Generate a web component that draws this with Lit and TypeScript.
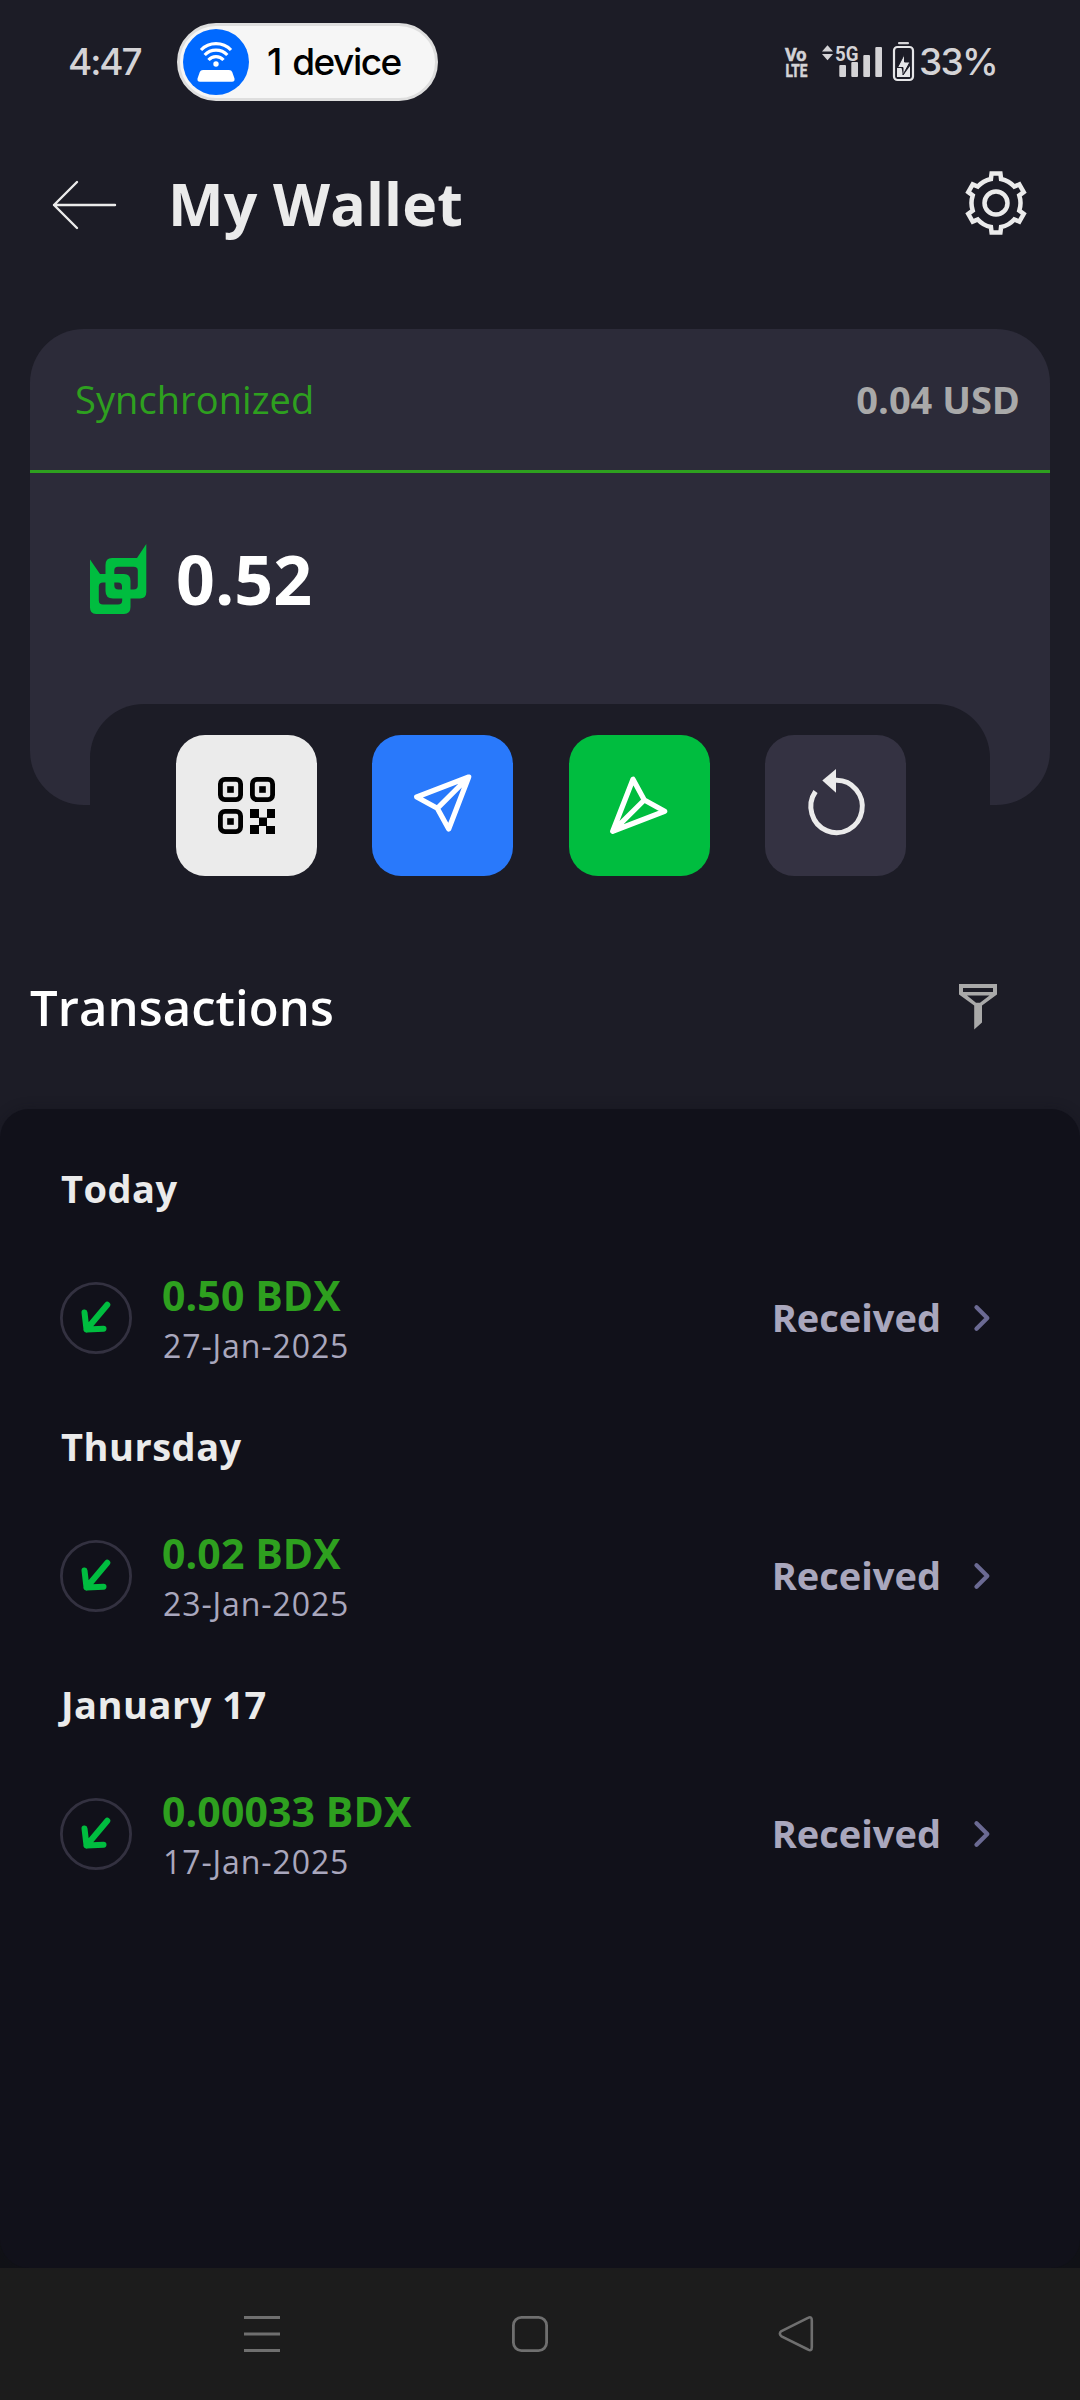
import { LitElement, html, css, svg } from "lit";
import { customElement, property } from "lit/decorators.js";

interface Transaction {
  day: string;
  amount: string;
  date: string;
  status: string;
}

const TRANSACTIONS: Transaction[] = [
  { day: "Today", amount: "0.50 BDX", date: "27-Jan-2025", status: "Received" },
  { day: "Thursday", amount: "0.02 BDX", date: "23-Jan-2025", status: "Received" },
  { day: "January 17", amount: "0.00033 BDX", date: "17-Jan-2025", status: "Received" },
];

/* Outline of the settings cog: six trapezoid teeth joined by arcs. */
function gearPath(cx: number, cy: number, rBody: number, rTip: number): string {
  const pt = (r: number, deg: number) => {
    const a = ((deg - 90) * Math.PI) / 180;
    return (cx + r * Math.cos(a)).toFixed(2) + " " + (cy + r * Math.sin(a)).toFixed(2);
  };
  let d = "";
  for (let i = 0; i < 6; i++) {
    const c = i * 60;
    d += (i === 0 ? "M" : "A" + rBody + " " + rBody + " 0 0 1 ") + pt(rBody, c - 12);
    d += "L" + pt(rTip, c - 8.5) + "L" + pt(rTip, c + 8.5) + "L" + pt(rBody, c + 12);
  }
  return d + "A" + rBody + " " + rBody + " 0 0 1 " + pt(rBody, -12) + "Z";
}

@customElement("status-bar")
export class StatusBar extends LitElement {
  static styles = css`
    :host { display: flex; height: 124px; box-sizing: border-box; padding: 23px 82px 0 68px; align-items: flex-start; font-family: Inter, "Liberation Sans", sans-serif; }
    .clock, .percent { font-size: 37px; font-weight: 500; line-height: 78px; color: #d4d3d6; white-space: nowrap; }
    .clock { width: 109px; letter-spacing: -2.1px; }
    .pill { display: flex; align-items: center; box-sizing: border-box; width: 261px; height: 78px; padding: 0 0 0 3px; border: 3px solid #dedede; border-radius: 39px; background: #f6f6f6; color: #000; font-size: 37px; font-weight: 500; line-height: 72px; letter-spacing: -1.5px; word-spacing: 3px; white-space: nowrap; }
    .badge { display: block; flex: none; margin-right: 18px; }
    .right { display: flex; margin-left: auto; height: 78px; }
    .icons { display: block; }
    .percent { width: 79px; letter-spacing: -1.7px; margin-left: 1px; }
    .small { font-family: Roboto, "Liberation Sans", sans-serif; font-weight: 700; fill: #d4d3d6; }
  `;
  render() {
    return html`
      <span class="clock">4:47</span>
      <div class="pill">
        <svg class="badge" width="66" height="66" viewBox="0 0 66 66">
          <circle cx="33" cy="33" r="33" fill="#0069ff" />
          <g fill="none" stroke="#fff" stroke-width="3.2">
            <path d="M18 21A21 21 0 0 1 48 21" />
            <path d="M21.700 26A15.500 15.500 0 0 1 44.300 26" />
            <path d="M25.500 31A10 10 0 0 1 40.500 31" />
          </g>
          <circle cx="33" cy="35" r="2.700" fill="#fff" />
          <path d="M20 41H46Q48.500 41 49.200 43L51.500 49.500Q52 52.800 49 52.800H17Q14 52.800 14.500 49.500L16.800 43Q17.500 41 20 41Z" fill="#fff" />
        </svg>
        <span>1 device</span>
      </div>
      <div class="right">
        <svg class="icons" width="138" height="78" viewBox="780 23 138 78">
          <text class="small" font-size="19" stroke="#d4d3d6" stroke-width="0.600"><tspan x="785" y="60.500" textLength="21.500" lengthAdjust="spacingAndGlyphs">Vo</tspan><tspan x="785.500" y="76.700" textLength="22" lengthAdjust="spacingAndGlyphs">LTE</tspan></text>
          <text class="small" x="835" y="60.500" font-size="21" textLength="23.500" lengthAdjust="spacingAndGlyphs">5G</text>
          <g fill="#d4d3d6">
            <path d="M827.500 45.200L833 51.500H822Z" />
            <path d="M827.500 60.200L833 54H822Z" />
            <rect x="839.300" y="65" width="6.700" height="12" rx="1" />
            <rect x="851.300" y="62" width="6.700" height="15" rx="1" />
            <rect x="863.300" y="55" width="6.700" height="22" rx="1" />
            <rect x="875.300" y="47" width="6.700" height="30" rx="1" />
            <rect x="898" y="42" width="11" height="2.200" rx="1" />
          </g>
          <rect x="894" y="47" width="19" height="33" rx="3.500" fill="none" stroke="#e6e6e8" stroke-width="2.200" />
          <path d="M897 68H901.500L903.500 75L910 66V77H897Z" fill="#e6e6e8" />
          <path d="M904.500 54V62H910L903 75V67.500H897.500Z" fill="#e6e6e8" stroke="#1c1c26" stroke-width="1" />
        </svg>
        <span class="percent">33%</span>
      </div>
    `;
  }
}

@customElement("wallet-card")
export class WalletCard extends LitElement {
  static styles = css`
    :host { display: block; margin: 0 30px; height: 547px; }
    .card { height: 476px; border-radius: 54px; background: #2c2b39; display: flex; flex-direction: column; }
    .sync { display: flex; justify-content: space-between; align-items: center; height: 139px; padding: 0 30px 2px 45px; border-bottom: 3px solid #2ea01f; font-size: 38px; line-height: 52px; }
    .state { color: #2ea01f; letter-spacing: 0.080px; }
    .fiat { color: #a9a9a9; font-weight: 700; }
    .balance { display: flex; align-items: center; padding: 68px 0 0 60px; height: 76px; gap: 29px; color: #fff; font-size: 68px; font-weight: 700; line-height: 76px; }
    .logo { display: block; }
    .notch { margin: auto 60px 0; height: 101px; border-radius: 54px 54px 0 0; background: #1c1c26; }
    .actions { display: flex; justify-content: space-between; padding: 0 144px 0 146px; margin-top: -70px; }
    .action { display: block; width: 141px; height: 141px; border-radius: 29px; }
    .scan { background: #ebebeb; }
    .send { background: #2979fb; }
    .receive { background: #00bd3f; }
    .rescan { background: #343242; }
  `;
  render() {
    const finder = (x: number, y: number) => svg`
      <rect x=${x + 2.4} y=${y + 2.4} width="20.200" height="20.200" rx="4.500" fill="none" stroke="#000" stroke-width="4.800" />
      <rect x=${x + 9.2} y=${y + 9.2} width="6.600" height="6.600" />`;
    const plane = "M96.700 42L44.700 62L65.300 73.300L76.700 94Z M96.700 42L65.300 73.300";
    return html`
      <div class="card">
        <div class="sync"><span class="state">Synchronized</span><span class="fiat">0.04 USD</span></div>
        <div class="balance">
          <svg class="logo" width="57" height="71" viewBox="0 0 57 71">
            <path fill="#00bd3f" fill-rule="evenodd" d="M0 15.500L10 30H15.500V21Q15.500 14 22 14H47L56.300 0V48Q56.300 54.500 50 54.500H40.500V63Q40.500 70 34 70H6Q0 70 0 63.500ZM13 38.500Q8.800 38.500 8.800 42.500V56.500Q8.800 60.500 13 60.500H28Q32.200 60.500 32.200 56.500V54.500H23Q15.500 54.500 15.500 47V38.500ZM24.300 30V26.500Q24.300 22.800 28 22.800H43.500Q47.800 22.800 47.800 26.500V41.500Q47.800 45.500 43.500 45.500H40.500V37Q40.500 30 34 30ZM24.300 38.500H28Q32 38.500 32 42.500V45.500H28.500Q24.300 45.500 24.300 41.500Z" />
          </svg>
          <span>0.52</span>
        </div>
        <div class="notch"></div>
      </div>
      <div class="actions">
        <svg class="action scan" viewBox="0 0 141 141">
          <g transform="translate(42 42)">
            ${finder(0, 0)}${finder(32, 0)}${finder(0, 32)}
            <path d="M32 32h9v8.500h8V32h8v9h-8v8h8v8h-9v-8h-7v8h-9v-9h9v-7h-9z" />
          </g>
        </svg>
        <svg class="action send" viewBox="0 0 141 141">
          <path d=${plane} fill="none" stroke="#fff" stroke-width="5.200" stroke-linejoin="round" />
        </svg>
        <svg class="action receive" viewBox="0 0 141 141">
          <path d="M64 44.300L43.700 96.300L95.700 76.300L75.300 65Z M43.700 96.300L75.300 65" fill="none" stroke="#fff" stroke-width="5.200" stroke-linejoin="round" />
        </svg>
        <svg class="action rescan" viewBox="0 0 141 141">
          <path d="M71 45.300A25.700 26.200 0 1 1 50.500 56.500" fill="none" stroke="#ebebeb" stroke-width="5" />
          <path d="M71 34V57.700L57.300 45.500Z" fill="#ebebeb" />
        </svg>
      </div>
    `;
  }
}

@customElement("transaction-row")
export class TransactionRow extends LitElement {
  @property({ attribute: false }) item!: Transaction;
  static styles = css`
    :host { display: block; height: 258px; }
    .day { height: 52px; padding: 0 61px; font-size: 38px; font-weight: 700; line-height: 52px; color: #ebebeb; letter-spacing: 0.500px; }
    .row { display: flex; align-items: center; padding: 52px 88px 0 60px; }
    .arrow { display: block; flex: none; margin-right: 30px; }
    .info { display: flex; flex-direction: column; padding-top: 4px; }
    .amount { font-size: 41px; font-weight: 700; line-height: 50px; color: #2ea01f; letter-spacing: 0.100px; }
    .date { height: 50px; font-size: 32px; line-height: 52px; color: #a9a7bd; letter-spacing: 0.900px; padding-left: 1px; }
    .status { margin-left: auto; padding-bottom: 2px; font-size: 38px; font-weight: 700; line-height: 52px; color: #a9a7bd; }
    .chevron { display: block; margin-left: 31px; }
  `;
  render() {
    return html`
      <div class="day">${this.item.day}</div>
      <div class="row">
        <svg class="arrow" width="72" height="72" viewBox="0 0 72 72">
          <circle cx="36" cy="36" r="34.600" fill="none" stroke="#333140" stroke-width="2.800" />
          <path d="M47.300 22.700L26.500 47.500M24.500 30.500L26.500 47.500L43.500 46.700" fill="none" stroke="#00bd3f" stroke-width="6" stroke-linecap="round" stroke-linejoin="round" />
        </svg>
        <div class="info">
          <span class="amount">${this.item.amount}</span>
          <span class="date">${this.item.date}</span>
        </div>
        <span class="status">${this.item.status}</span>
        <svg class="chevron" width="20" height="30" viewBox="0 0 20 30">
          <path d="M4.500 4.200L15.300 15L4.500 25.800" fill="none" stroke="#6b6a93" stroke-width="4.300" stroke-linecap="round" stroke-linejoin="round" />
        </svg>
      </div>
    `;
  }
}

@customElement("nav-bar")
export class NavBar extends LitElement {
  static styles = css`
    :host { display: flex; justify-content: space-between; align-items: center; box-sizing: border-box; height: 132px; padding: 0 264px 0 242px; background: #1c1c1c; }
    .nav { display: block; }
  `;
  render() {
    return html`
      <svg class="nav" width="40" height="40" viewBox="0 0 40 40"><path d="M2 3.500H38M2 20H38M2 36.500H38" stroke="#6f6f6f" stroke-width="3.200" /></svg>
      <svg class="nav" width="40" height="40" viewBox="0 0 40 40"><rect x="4.400" y="3.400" width="33.200" height="33.200" rx="8" fill="none" stroke="#6f6f6f" stroke-width="2.800" /></svg>
      <svg class="nav" width="40" height="40" viewBox="0 0 40 40"><path d="M32 3.900Q35.800 1.800 35.800 6.500V33Q35.800 37.800 32 35.500L5.500 22.300Q2.200 19.700 5.500 17.100Z" fill="none" stroke="#6f6f6f" stroke-width="2.600" stroke-linejoin="round" /></svg>
    `;
  }
}

@customElement("app-root")
export class AppRoot extends LitElement {
  static styles = css`
    :host { display: flex; flex-direction: column; width: 1080px; height: 2400px; overflow: hidden; background: #1c1c26; font-family: "Open Sans", "Noto Sans", sans-serif; }
    .header { display: flex; align-items: center; height: 160px; padding: 0 52px 0 50px; margin-bottom: 45px; }
    .title { margin: 0 auto 2px 48px; font-size: 59px; font-weight: 700; line-height: 80px; color: #ebebeb; letter-spacing: 0.150px; }
    .icon { display: block; }
    .heading { display: flex; justify-content: space-between; align-items: center; height: 66px; margin: 98px 80px 69px 30px; }
    .subtitle { margin: 0; font-size: 49px; font-weight: 600; line-height: 66px; color: #fff; letter-spacing: 0.080px; }
    .sheet { flex: 1; display: flex; background: linear-gradient(#1c1c26 50%, #111217 50%); }
    .panel { flex: 1; box-sizing: border-box; padding-top: 53px; border-radius: 29px; background: #11111a; box-shadow: 0 0 12px rgba(17, 17, 26, 0.350); }
  `;
  render() {
    return html`
      <status-bar></status-bar>
      <div class="header">
        <svg class="icon" width="70" height="60" viewBox="0 0 70 60">
          <path d="M65 31H4M27 8L4 31L27 54" fill="none" stroke="#ebebeb" stroke-width="2.400" stroke-linecap="round" stroke-linejoin="round" />
        </svg>
        <h1 class="title">My Wallet</h1>
        <svg class="icon" width="64" height="68" viewBox="0 0 64 68">
          <path d=${gearPath(32, 33, 24.5, 29.8)} fill="none" stroke="#ebebeb" stroke-width="4.500" />
          <circle cx="32" cy="33" r="11.500" fill="none" stroke="#ebebeb" stroke-width="4.500" />
        </svg>
      </div>
      <wallet-card></wallet-card>
      <div class="heading">
        <h2 class="subtitle">Transactions</h2>
        <svg class="icon" width="44" height="50" viewBox="956 982 44 50">
          <path fill="#a9a9a9" fill-rule="evenodd" d="M959 984H997V994.500L982 1005.500V1022.500L974.200 1029.500V1005.500L959 994.500ZM963 988V992H993V988ZM967 995.500L976 1002.700H980L989.500 995.500Z" />
        </svg>
      </div>
      <div class="sheet">
        <div class="panel">
          ${TRANSACTIONS.map((t) => html`<transaction-row .item=${t}></transaction-row>`)}
        </div>
      </div>
      <nav-bar></nav-bar>
    `;
  }
}
